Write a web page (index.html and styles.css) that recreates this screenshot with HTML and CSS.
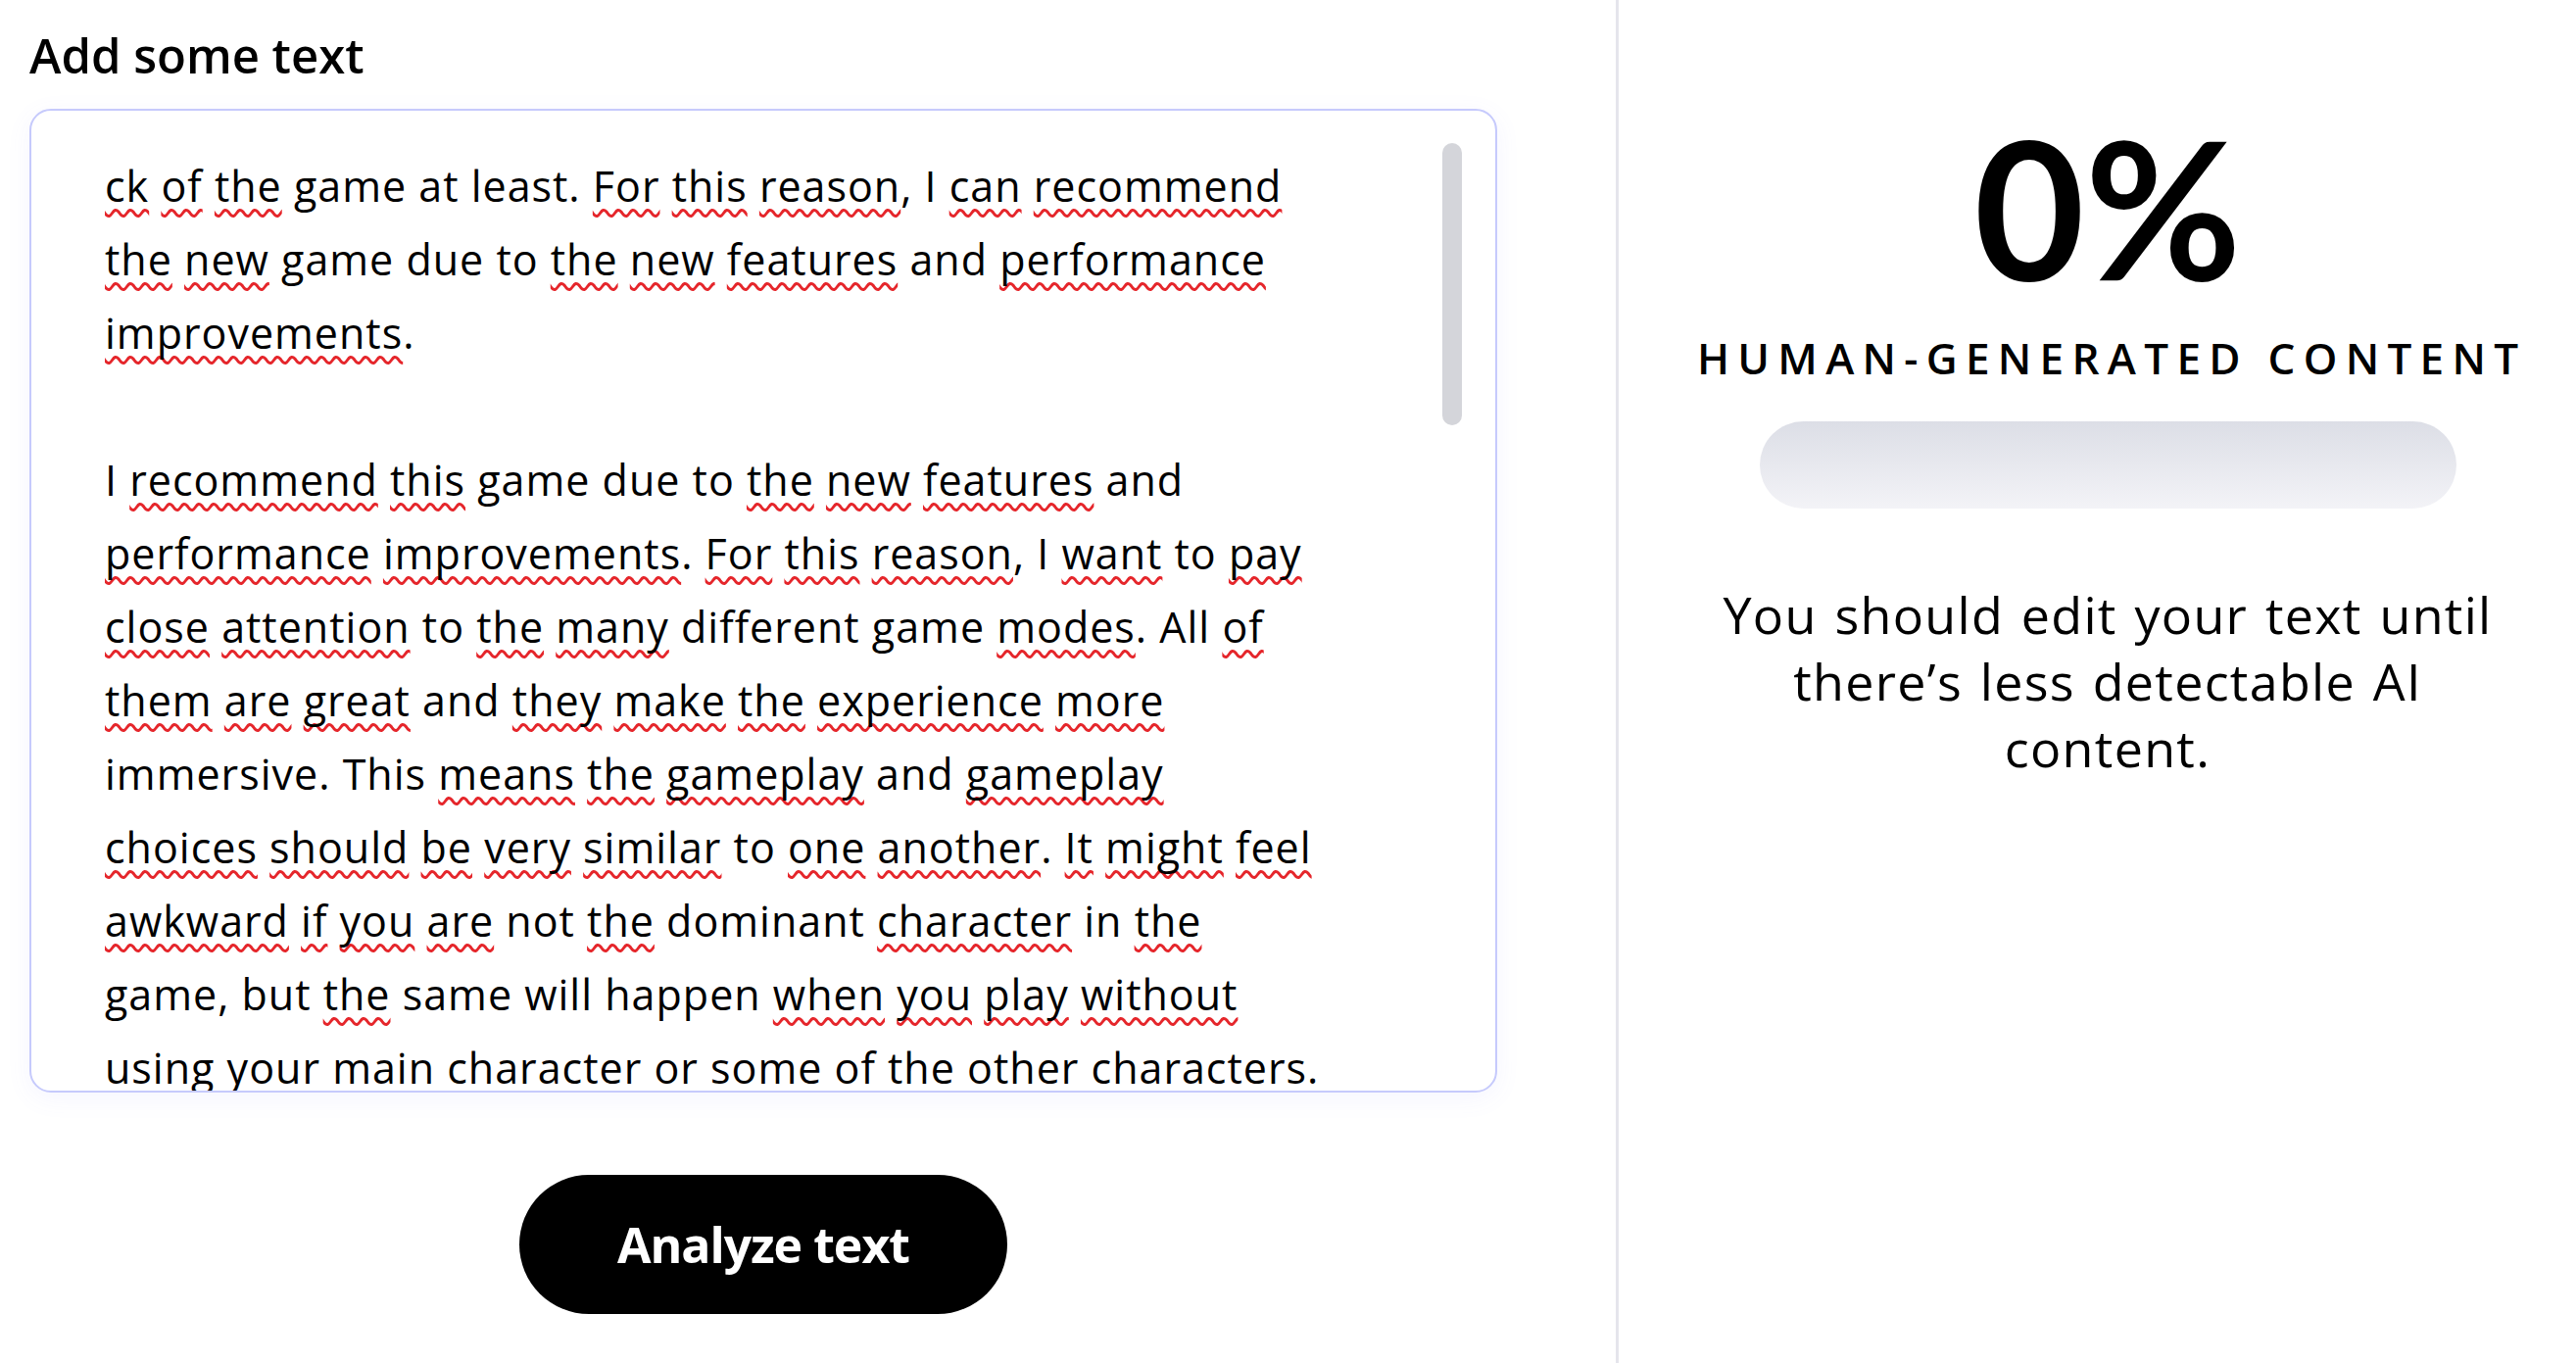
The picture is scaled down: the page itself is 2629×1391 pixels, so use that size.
FILE: index.html
```html
<!DOCTYPE html>
<html lang="en">
<head>
<meta charset="utf-8">
<title>AI Content Detector</title>
<link rel="stylesheet" href="styles.css">
</head>
<body>
<main class="page">
  <section class="editor">
    <h2 class="editor-title">Add some text</h2>
    <div class="textbox">
      <div class="textbox-content">
        <p class="para"><span class="sp">ck</span> <span class="sp">of</span> <span class="sp">the</span> game at least. <span class="sp">For</span> <span class="sp">this</span> <span class="sp">reason</span>, I <span class="sp">can</span> <span class="sp">recommend</span><br><span class="sp">the</span> <span class="sp">new</span> game due to <span class="sp">the</span> <span class="sp">new</span> <span class="sp">features</span> and <span class="sp">performance</span><br><span class="sp">improvements</span>.</p>
        <p class="para"><br>I <span class="sp">recommend</span> <span class="sp">this</span> game due to <span class="sp">the</span> <span class="sp">new</span> <span class="sp">features</span> and<br><span class="sp">performance</span> <span class="sp">improvements</span>. <span class="sp">For</span> <span class="sp">this</span> <span class="sp">reason</span>, I <span class="sp">want</span> to <span class="sp">pay</span><br><span class="sp">close</span> <span class="sp">attention</span> to <span class="sp">the</span> <span class="sp">many</span> different game <span class="sp">modes</span>. All <span class="sp">of</span><br><span class="sp">them</span> <span class="sp">are</span> <span class="sp">great</span> and <span class="sp">they</span> <span class="sp">make</span> <span class="sp">the</span> <span class="sp">experience</span> <span class="sp">more</span><br>immersive. This <span class="sp">means</span> <span class="sp">the</span> <span class="sp">gameplay</span> and <span class="sp">gameplay</span><br><span class="sp">choices</span> <span class="sp">should</span> <span class="sp">be</span> <span class="sp">very</span> <span class="sp">similar</span> to <span class="sp">one</span> <span class="sp">another</span>. <span class="sp">It</span> <span class="sp">might</span> <span class="sp">feel</span><br><span class="sp">awkward</span> <span class="sp">if</span> <span class="sp">you</span> <span class="sp">are</span> not <span class="sp">the</span> dominant <span class="sp">character</span> in <span class="sp">the</span><br>game, but <span class="sp">the</span> same will happen <span class="sp">when</span> <span class="sp">you</span> <span class="sp">play</span> <span class="sp">without</span><br><span class="sp">using</span> <span class="sp">your</span> <span class="sp">main</span> <span class="sp">character</span> <span class="sp">or</span> <span class="sp">some</span> <span class="sp">of</span> <span class="sp">the</span> <span class="sp">other</span> <span class="sp">characters</span>.</p>
      </div>
      <div class="scroll-thumb"></div>
    </div>
    <div class="actions">
      <button class="analyze-btn" type="button">Analyze text</button>
    </div>
  </section>
  <aside class="result">
    <div class="score">0%</div>
    <div class="score-label">HUMAN-GENERATED CONTENT</div>
    <div class="meter"></div>
    <p class="advice">You should edit your text until<br>there’s less detectable AI<br>content.</p>
  </aside>
</main>
</body>
</html>
```
FILE: styles.css
```css
html, body {
  margin: 0;
  padding: 0;
  background: #ffffff;
  color: #000000;
  font-family: "Open Sans", "Noto Sans", sans-serif;
}

.page {
  display: grid;
  grid-template-columns: 1649px 1fr;
  height: 100vh;
  overflow: hidden;
}

.editor {
  padding: 22px 0 0 30px;
}

.editor-title {
  margin: 0 0 21px;
  font-size: 49px;
  line-height: 68px;
  font-weight: 600;
  letter-spacing: 0;
}

.textbox {
  position: relative;
  width: 1498px;
  height: 1004px;
  box-sizing: border-box;
  border: 2px solid #c6cafc;
  border-radius: 22px;
  background: #ffffff;
  box-shadow: 0 6px 26px rgba(110, 120, 255, 0.07);
  overflow: hidden;
}

.textbox-content {
  padding: 39px 0 0 75px;
  font-size: 43px;
  line-height: 75px;
  letter-spacing: 1px;
  white-space: nowrap;
}

.para {
  margin: 0;
}

.sp {
  text-decoration: underline wavy #e5262b;
  text-decoration-thickness: 3px;
  text-underline-offset: 7px;
  text-decoration-skip-ink: none;
}

.scroll-thumb {
  position: absolute;
  top: 33px;
  right: 34px;
  width: 20px;
  height: 288px;
  border-radius: 10px;
  background: #d4d5da;
}

.actions {
  width: 1498px;
  display: flex;
  justify-content: center;
  margin-top: 84px;
}

.analyze-btn {
  width: 498px;
  height: 142px;
  border: none;
  border-radius: 71px;
  background: #000000;
  color: #ffffff;
  font-family: "Open Sans", "Noto Sans", sans-serif;
  font-size: 50px;
  font-weight: 700;
  letter-spacing: -1px;
  padding: 0;
  cursor: pointer;
}

.result {
  border-left: 3px solid #e5e5ec;
  padding: 114px 0 0 21px;
  display: flex;
  flex-direction: column;
  align-items: center;
}

.score {
  font-family: "Lato", sans-serif;
  font-weight: 700;
  font-size: 195px;
  line-height: 195px;
}

.score-label {
  margin-top: 26px;
  font-size: 44px;
  line-height: 60px;
  font-weight: 600;
  letter-spacing: 8.3px;
  padding-left: 8.3px;
  white-space: nowrap;
}

.meter {
  margin-top: 35px;
  width: 711px;
  height: 89px;
  border-radius: 45px;
  background: linear-gradient(180deg, #dcdee6 0%, #f3f3f7 100%);
}

.advice {
  margin: 74px 0 0;
  font-size: 52px;
  line-height: 68px;
  letter-spacing: 1.3px;
  word-spacing: 3px;
  text-align: center;
  white-space: nowrap;
}
```
